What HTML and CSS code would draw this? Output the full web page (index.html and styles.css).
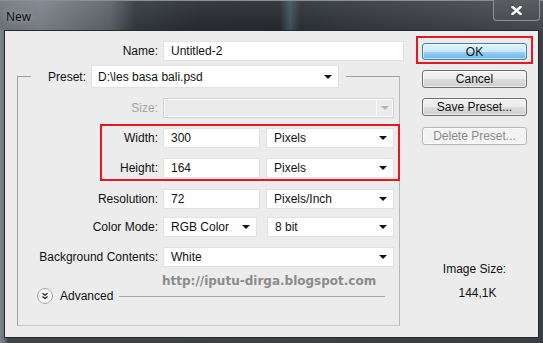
FILE: index.html
```html
<!DOCTYPE html>
<html lang="en">
<head>
    <meta charset="UTF-8">
    <title>New</title>
    <link rel="stylesheet" href="styles.css">
</head>
<body>
    <div class="window">
        <div class="titlebar">
            <span class="title">New</span>
            <button class="close" aria-label="Close">
                <svg width="11" height="9" viewBox="0 0 11 9"><path d="M1.5 1 L9.5 8 M9.5 1 L1.5 8" stroke="#fff" stroke-width="2.4" stroke-linecap="square"/></svg>
            </button>
        </div>

        <div class="client">
            <div class="form">
                <div class="row name-row">
                    <label>Name:</label>
                    <div class="field">Untitled-2</div>
                </div>

                <fieldset class="group">
                    <legend class="preset">
                        <label>Preset:</label>
                        <div class="field select preset-select">D:\les basa bali.psd<span class="caret"></span></div>
                    </legend>

                    <div class="row size-row">
                        <label class="dim">Size:</label>
                        <div class="field select off"><span class="caret-box"><span class="caret"></span></span></div>
                    </div>

                    <div class="mark">
                        <div class="row">
                            <label>Width:</label>
                            <div class="pair">
                                <div class="field">300</div>
                                <div class="field select">Pixels<span class="caret"></span></div>
                            </div>
                        </div>
                        <div class="row">
                            <label>Height:</label>
                            <div class="pair">
                                <div class="field">164</div>
                                <div class="field select">Pixels<span class="caret"></span></div>
                            </div>
                        </div>
                    </div>

                    <div class="row res-row">
                        <label>Resolution:</label>
                        <div class="pair">
                            <div class="field">72</div>
                            <div class="field select">Pixels/Inch<span class="caret"></span></div>
                        </div>
                    </div>
                    <div class="row mode-row">
                        <label>Color Mode:</label>
                        <div class="pair">
                            <div class="field select">RGB Color<span class="caret"></span></div>
                            <div class="field select">8 bit<span class="caret"></span></div>
                        </div>
                    </div>
                    <div class="row bg-row">
                        <label>Background Contents:</label>
                        <div class="field select">White<span class="caret"></span></div>
                    </div>

                    <div class="watermark">http://iputu-dirga.blogspot.com</div>

                    <div class="advanced">
                        <span class="adv-icon">
                            <svg width="16" height="16" viewBox="0 0 16 16">
                                <circle cx="8" cy="8" r="7.5" fill="#f4f4f4" stroke="#a9a9a9"/>
                                <path d="M5.5 5.2 L8 7.2 L10.5 5.2 M5.5 8.4 L8 10.4 L10.5 8.4" fill="none" stroke="#222" stroke-width="1.3"/>
                            </svg>
                        </span>
                        <span>Advanced</span>
                        <span class="adv-line"></span>
                    </div>
                </fieldset>
            </div>

            <div class="side">
                <div class="ok-mark"><button class="btn primary">OK</button></div>
                <button class="btn cancel">Cancel</button>
                <button class="btn save">Save Preset...</button>
                <button class="btn delete" disabled>Delete Preset...</button>
                <div class="image-size">
                    <div>Image Size:</div>
                    <div class="size-value">144,1K</div>
                </div>
            </div>
        </div>
    </div>
</body>
</html>
```

FILE: styles.css
```css
body {
    margin: 0;
    background: #3c4045;
    font-family: "Liberation Sans", Arial, sans-serif;
    font-size: 12px;
    color: #111;
}
.window {
    width: 543px;
    height: 343px;
    display: flex;
    flex-direction: column;
    background: linear-gradient(to right, #7f858c 0, #71767d 4px, #3f4449 8px, #3a3e43 100%);
    overflow: hidden;
}
.titlebar {
    height: 30px;
    flex: none;
    display: flex;
    align-items: flex-start;
    justify-content: space-between;
    border-top: 1px solid #8b8f94;
    box-sizing: border-box;
    background:
        linear-gradient(to bottom, rgba(255,255,255,0.08), rgba(0,0,0,0.05)),
        linear-gradient(to right, #6f757c 0, #7c828a 40px, #5c6167 110px, #33383d 135px, #272b30 200px, #262a2f 280px, #3e545e 290px, #2c3136 300px, #34383c 360px, #474b4f 543px);
}
.title {
    margin: 7px 0 0 6px;
    font-family: "Open Sans", "Liberation Sans", sans-serif;
    font-size: 12px;
    color: #0c0c0c;
    text-shadow: 0 0 6px rgba(255,255,255,0.45);
}
.close {
    width: 47px;
    height: 21px;
    margin: -1px 3px 0 0;
    padding: 0;
    display: flex;
    align-items: center;
    justify-content: center;
    background: linear-gradient(to bottom, #5a5e62, #4a4e52);
    border: 1px solid #8e9296;
    border-top: none;
    border-radius: 0 0 4px 4px;
}
.client {
    height: 308px;
    margin: 0 4px;
    box-sizing: border-box;
    display: flex;
    background: #ececec;
    border: 1px solid #26292c;
}
.form {
    width: 399px;
    padding: 10px 0 0 12px;
    box-sizing: border-box;
}

/* rows */
.row {
    display: grid;
    grid-template-columns: 140px 231px;
    column-gap: 5px;
    align-items: center;
    height: 20px;
}
.row label {
    text-align: right;
    white-space: nowrap;
}
.name-row {
    grid-template-columns: 141px 241px;
}
.field {
    height: 20px;
    box-sizing: border-box;
    display: flex;
    align-items: center;
    justify-content: space-between;
    padding: 0 6px 0 7px;
    background: #fff;
    border: 1px solid #e2e2e2;
    white-space: nowrap;
}
.pair {
    display: grid;
    grid-template-columns: 97px 128px;
    column-gap: 6px;
}
.caret {
    width: 0;
    height: 0;
    border-left: 4px solid transparent;
    border-right: 4px solid transparent;
    border-top: 4px solid #111;
}
.dim {
    color: #a4a4a4;
}
.off {
    background: #ebebeb;
    border-color: #d3d3d3;
    box-shadow: inset 0 0 0 1px #f9f9f9;
    justify-content: flex-end;
    padding: 0;
}
.caret-box {
    height: 100%;
    width: 16px;
    display: flex;
    align-items: center;
    justify-content: center;
    border-left: 1px solid #f9f9f9;
}
.off .caret {
    border-top-color: #b4b4b4;
}

/* group box */
.group {
    width: 383px;
    margin: 4px 0 0 0;
    padding: 0 0 21px 0;
    box-sizing: border-box;
    border: 1px solid #9f9f9f;
    border-right-color: #b8b8b8;
    border-bottom-color: #c9c9c9;
    min-width: 0;
}
.preset {
    display: flex;
    align-items: center;
    gap: 5px;
    margin-left: 13px;
    padding: 0 7px 0 17px;
    height: 23px;
}
.preset-select {
    width: 248px;
    height: 23px;
    padding-left: 6px;
}
.size-row {
    margin-top: 10px;
}
.mark {
    margin: 6px -1px 0 82px;
    padding: 0 0 1px 0;
    border: 2px solid #e8161d;
}
.mark .row {
    grid-template-columns: 56px 231px;
    margin-top: 10px;
}
.mark .row:first-child {
    margin-top: 2px;
}
.res-row {
    margin-top: 8px;
}
.mode-row {
    margin-top: 8px;
}
.mode-row .pair {
    grid-template-columns: 94px 127px;
    column-gap: 10px;
}
.bg-row {
    margin-top: 10px;
}
.watermark {
    margin: 7px 0 0 144px;
    height: 14px;
    line-height: 14px;
    font-family: "DejaVu Sans", Verdana, sans-serif;
    font-weight: bold;
    font-size: 12px;
    color: #8b8b8b;
}
.advanced {
    display: flex;
    align-items: center;
    height: 16px;
    padding-left: 19px;
    padding-right: 14px;
}
.adv-icon {
    display: flex;
    margin-right: 7px;
}
.adv-line {
    flex: 1;
    height: 1px;
    margin-left: 6px;
    background: #a6a6a6;
}

/* side buttons */
.side {
    width: 117px;
    margin-left: 12px;
    padding-top: 5px;
    display: flex;
    flex-direction: column;
    align-items: center;
}
.ok-mark {
    padding: 5px 4px 2px 4px;
    border: 2px solid #e8161d;
}
.btn {
    width: 105px;
    height: 18px;
    margin: 0;
    padding: 0;
    font-family: "Liberation Sans", Arial, sans-serif;
    font-size: 12px;
    color: #111;
    border: 1px solid #707070;
    border-radius: 3px;
    background: linear-gradient(to bottom, #f3f3f3 0, #ebebeb 50%, #dddddd 51%, #cfcfcf 100%);
    box-shadow: inset 0 0 0 1px rgba(255,255,255,0.6);
}
.primary {
    height: 17px;
    border-color: #3c7fb1;
    background: linear-gradient(to bottom, #e6f5fd 0, #c6e7f8 50%, #9bd3f1 51%, #6ab6df 100%);
}
.cancel {
    margin-top: 6px;
}
.save {
    margin-top: 10px;
}
.delete {
    margin-top: 11px;
    color: #8a8a8a;
    border-color: #b4b8bb;
    background: #f3f3f3;
}
.image-size {
    margin-top: 117px;
    text-align: center;
    line-height: 14px;
}
.size-value {
    margin-top: 10px;
    padding-left: 6px;
}
```
